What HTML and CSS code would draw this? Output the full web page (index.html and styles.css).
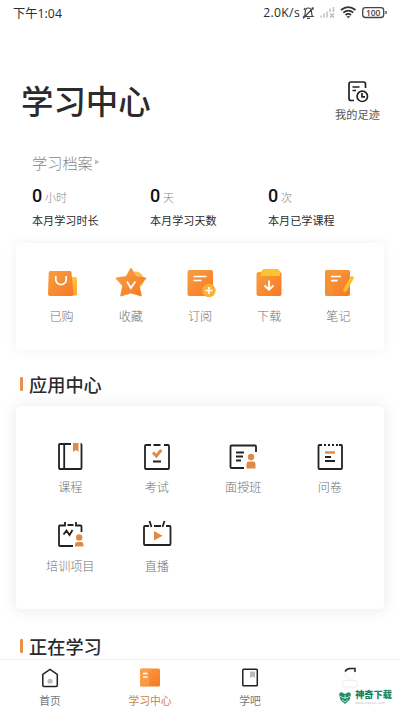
FILE: index.html
```html
<!DOCTYPE html>
<html lang="zh-CN">
<head>
<meta charset="utf-8">
<title>学习中心</title>
<link rel="stylesheet" href="styles.css">
</head>
<body>
<svg width="0" height="0" class="defs">
  <defs>
    <linearGradient id="og" x1="0" y1="0" x2="1" y2="1"><stop offset="0" stop-color="#f6a040"/><stop offset="1" stop-color="#f87826"/></linearGradient>
    <linearGradient id="yg" x1="0" y1="0" x2="0" y2="1"><stop offset="0" stop-color="#fdc540"/><stop offset="1" stop-color="#fca62e"/></linearGradient>
  </defs>
</svg>
<div class="screen">
  <div class="status">
    <span class="time">下午<span class="digits">1:04</span></span>
    <span class="speed">2.0K/s</span>
    <svg class="status-icons" width="88" height="16" viewBox="300 5 88 16" fill="none">
      <path d="M304 16.500c1.200-1 1.300-2.500 1.300-4.500 0-2.500 1.300-4 3-4s3.200 1.500 3.200 4c0 2 .2 3.500 1.400 4.500zM307 18.300h3M303 18.500 313.500 7.500M312 7.500l1.500 2M304 10l1-2" stroke="#444" stroke-width="1.200"/>
      <path d="M321 17.500v-2M324 17.500v-4M327 17.500v-6M330 12V8.500M333.500 12V7M330 13.500l4 4M334 13.500l-4 4" stroke="#bbb" stroke-width="1.400"/>
      <path d="M341 10c4.500-3.500 10-3.500 14.500 0M343.300 12.600c3-2.500 7-2.500 10 0M345.500 15c1.800-1.500 3.800-1.500 5.600 0" stroke="#333" stroke-width="1.700"/>
      <path d="M346.300 16.300h4l-2 2z" fill="#333"/>
      <rect x="362.700" y="7.700" width="21" height="9.800" rx="2.800" stroke="#444" stroke-width="1.300"/>
      <path d="M386 11v3" stroke="#444" stroke-width="1.300"/>
      <text class="battery-text" x="373.200" y="15.500" text-anchor="middle">100</text>
    </svg>
  </div>

  <header class="header">
    <h1>学习中心</h1>
    <div class="footprint">
      <svg width="22" height="23" viewBox="347 80 22 23" fill="none" stroke="#222" stroke-width="1.700">
        <path d="M354 100.500h-3q-2 0-2-2V84q0-2 2-2h12.500q2 0 2 2v4M352.500 87h7M352.500 90.500h3.500"/>
        <circle cx="362.300" cy="96.300" r="5.200"/><path d="M362 93v3.800h3"/>
      </svg>
      <span>我的足迹</span>
    </div>
  </header>

  <section class="archive">
    <div class="archive-title">学习档案<svg width="5" height="6" viewBox="0 0 5 6"><path d="M0 .5 4.500 3 0 5.500z" fill="#bbb"/></svg></div>
    <div class="stats">
      <div class="stat"><p><b>0</b>小时</p><span>本月学习时长</span></div>
      <div class="stat"><p><b>0</b>天</p><span>本月学习天数</span></div>
      <div class="stat"><p><b>0</b>次</p><span>本月已学课程</span></div>
    </div>
  </section>

  <nav class="card quick">
    <div class="item">
      <svg width="32" height="32" viewBox="0 0 32 32"><rect x="18" y="9" width="13" height="18.500" rx="1.500" fill="url(#yg)"/><path d="M4 3h20q1.500 0 1.500 1.500l2 21.500q0 2-1.700 2H4q-2 0-2-2L2.700 4.500Q2.700 3 4 3z" fill="url(#og)"/><path d="M9.800 8v3.500a5.200 5.200 0 0 0 10.400 0V8" fill="none" stroke="#fff" stroke-width="1.700"/></svg>
      <span>已购</span>
    </div>
    <div class="item">
      <svg width="32" height="32" viewBox="0 0 32 32"><circle cx="20.500" cy="12" r="8.500" fill="#fdc057"/><path d="M16 1 20.300 8.800 30.300 10.500 23.600 17.500 25.800 27.500 16 24.300 6.200 27.500 8.200 17.500 1.700 10.500 11.700 8.800z" fill="url(#og)" stroke="url(#og)" stroke-width="1.800" stroke-linejoin="round"/><path d="m12 13.500 3.800 6.500 4.500-6.500" fill="none" stroke="#fff" stroke-width="1.800"/></svg>
      <span>收藏</span>
    </div>
    <div class="item">
      <svg width="32" height="32" viewBox="0 0 32 32"><rect x="3.500" y="2" width="25.500" height="26" rx="2" fill="url(#og)"/><path d="M9.500 8.500h13M9.500 12.500h8" stroke="#fff" stroke-width="1.700"/><circle cx="25" cy="22.500" r="6.700" fill="#fbb03b"/><path d="M21.500 22.500h7M25 19v7" stroke="#fff" stroke-width="1.700"/></svg>
      <span>订阅</span>
    </div>
    <div class="item">
      <svg width="32" height="32" viewBox="0 0 32 32"><rect x="3.500" y="4" width="25" height="24" rx="2" fill="url(#og)"/><path d="M10 1h15l1 1.500h1V8H8V3h1z" fill="#fdc22f"/><path d="M16 12.500v9M11.500 17.500l4.500 4.300 4.500-4.300" fill="none" stroke="#fff" stroke-width="1.900"/></svg>
      <span>下载</span>
    </div>
    <div class="item">
      <svg width="32" height="32" viewBox="0 0 32 32"><rect x="3" y="2" width="25" height="26" rx="2" fill="url(#og)"/><path d="M4.500 2H11v26H4.500Q3 28 3 26.500v-23Q3 2 4.500 2z" fill="#f3922f" opacity=".6"/><path d="M9 8.500h10M9 12.700h6.500" stroke="#fff" stroke-width="1.700"/><path d="M30 10 23 22" stroke="#fdc030" stroke-width="3.600" stroke-linecap="round"/></svg>
      <span>笔记</span>
    </div>
  </nav>

  <h2 class="section-title apps-title">应用中心</h2>

  <section class="card apps">
    <div class="item">
      <svg width="32" height="32" viewBox="0 0 32 32" fill="none" stroke="#222" stroke-width="1.800"><path d="M17 3H6Q5 3 5 4v23q0 1 1 1h20.500q1 0 1-1V4q0-1-1-1M10.200 3v25"/><path d="M19 2h5.500v9l-2.700-2L19 11z" fill="#e28a43" stroke="none"/></svg>
      <span>课程</span>
    </div>
    <div class="item">
      <svg width="32" height="32" viewBox="0 0 32 32" fill="none" stroke="#222" stroke-width="1.800"><path d="M10 4H5Q4 4 4 5v22q0 1 1 1h22q1 0 1-1V5q0-1-1-1h-4M12.500 4h7M12 20.500h8"/><path d="m12 11.500 3.300 3.500 5-6" stroke="#e28a43" stroke-width="3"/></svg>
      <span>考试</span>
    </div>
    <div class="item">
      <svg width="32" height="32" viewBox="0 0 32 32" fill="none" stroke="#222" stroke-width="1.800"><path d="M29 11V5.500q0-1-1-1H4.500q-1 0-1 1V26q0 1 1 1H17M9 11.500h8M9 15.500h7M9 19.500h5"/><circle cx="24" cy="16" r="3.200" fill="#e28a43" stroke="none"/><path d="M19.500 27.500V23q0-2.500 2.500-2.500h4q2.500 0 2.500 2.500v4.500z" fill="#e28a43" stroke="none"/></svg>
      <span>面授班</span>
    </div>
    <div class="item">
      <svg width="32" height="32" viewBox="0 0 32 32" fill="none" stroke="#222" stroke-width="1.800"><path d="M8 4H5.500q-1 0-1 1v22q0 1 1 1H27q1 0 1-1V5q0-1-1-1h-2M10 4h2M14 4h2M18 4h2M22 4h2M11 16h6M11 20h10"/><path d="M11 11.500h10" stroke="#e28a43" stroke-width="2.400"/></svg>
      <span>问卷</span>
    </div>
    <div class="item">
      <svg width="32" height="32" viewBox="0 0 32 32" fill="none" stroke="#222" stroke-width="1.800"><path d="M11 2v3.500H6Q5 5.500 5 6.500V25q0 1 1 1h13M13.500 5h6M22 2v3.500h4.500q1 0 1 1V12M9.500 14.500l3-4 3 4.500 3-5"/><circle cx="25.200" cy="17.500" r="3.200" fill="#e28a43" stroke="none"/><path d="M21 26.500V25q0-3 2.500-3h3.500q2.500 0 2.500 3v1.500z" fill="#e28a43" stroke="none"/></svg>
      <span>培训项目</span>
    </div>
    <div class="item">
      <svg width="32" height="32" viewBox="0 0 32 32" fill="none" stroke="#222" stroke-width="1.800"><path d="M8 6H4Q3 6 3 7v17q0 1 1 1h24.500q1 0 1-1V7q0-1-1-1H25M13 6h7M8.500 1l2 6M23.500 1l-2 6"/><path d="M13 11v9.500l8.500-4.700z" fill="#e28a43" stroke="none"/></svg>
      <span>直播</span>
    </div>
  </section>

  <h2 class="section-title learning-title">正在学习</h2>

  <footer class="tabs">
    <div class="tab">
      <svg width="24" height="22" viewBox="0 0 24 22"><path d="M4.800 7.500v11q0 1 1 1h12.500q1 0 1-1v-11L12 2.300z" fill="none" stroke="#222" stroke-width="1.500"/><rect x="9.500" y="12" width="5" height="4.500" rx="1.500" fill="#bbb"/></svg>
      <span>首页</span>
    </div>
    <div class="tab active">
      <svg width="24" height="22" viewBox="0 0 24 22"><rect x="2" y="1.500" width="20" height="18" rx="1.500" fill="url(#og)"/><path d="M2 3q0-1.500 1.500-1.500H11v18H3.500Q2 19.500 2 18z" fill="#faa554" opacity=".6"/><path d="M5 6.500h4.500M5 10h4.500" stroke="#fff" stroke-width="1.500"/></svg>
      <span>学习中心</span>
    </div>
    <div class="tab">
      <svg width="24" height="22" viewBox="0 0 24 22"><rect x="4.800" y="2.300" width="14.500" height="16.500" rx=".8" fill="none" stroke="#222" stroke-width="1.500"/><path d="M12 4.500h5V11l-2.500-1.500L12 11z" fill="#bbb"/></svg>
      <span>学吧</span>
    </div>
    <div class="tab mine">
      <svg width="24" height="22" viewBox="0 0 24 22" fill="none"><circle cx="12" cy="7" r="5" stroke="#f1f1f1"/><rect x="4.500" y="13.500" width="15" height="6.500" rx="2" stroke="#eee"/><path d="M7 4.500Q9 1.500 12 1.500h5V5" stroke="#222" stroke-width="1.500"/></svg>
      <div class="brand">
        <svg width="12" height="12" viewBox="0 0 12 12"><path d="m0 2 2-2 4 2 4-2 2 2-1.500 6L6 12 1.500 8z" fill="#218f69"/><path d="m1 4 3 1.800h4L11 4M3 7.500 6 10l3-2.500M6 3v4" fill="none" stroke="#d8f0e7" stroke-width=".8"/></svg>
        <div class="brand-name"><strong>神奇下载</strong><small>www.xqszz.com</small></div>
      </div>
    </div>
  </footer>
</div>
</body>
</html>
```

FILE: styles.css
```css
* { box-sizing: border-box; margin: 0; padding: 0; }
body { background: #fff; font-family: "Noto Sans CJK SC", sans-serif; color: #2a2b2d; }
.defs { display: block; height: 0; }
svg { display: block; flex: none; }
.screen { width: 400px; height: 711px; overflow: hidden; display: flex; flex-direction: column; }
.status { height: 26px; flex: none; padding: 0 12px 0 13px; display: flex; align-items: center; line-height: 26px; }
.time { font-size: 12.2px; margin-right: auto; }
.digits { font-family: "Open Sans", sans-serif; font-size: 12.3px; letter-spacing: .1px; }
.speed { font-family: "Open Sans", "Noto Sans CJK SC", sans-serif; font-size: 12.2px; letter-spacing: .3px; }
.battery-text { font: 600 8.5px "Open Sans", sans-serif; fill: #444; }

.header { height: 124px; flex: none; padding: 54px 20px 0 21px; display: flex; justify-content: space-between; }
h1 { font-size: 32.4px; font-weight: 500; line-height: 40px; }
.footprint { display: flex; flex-direction: column; align-items: center; width: 45px; font-size: 11.2px; line-height: 16px; white-space: nowrap; color: #555; gap: 3px; }
.footprint svg { margin-left: 1px; }

.archive { height: 93px; flex: none; padding-left: 32px; }
.archive-title { display: flex; align-items: center; gap: 2px; font-size: 15.2px; line-height: 23px; height: 24px; color: #85878a; font-weight: 300; }
.stats { display: flex; padding-top: 10px; }
.stat { width: 118px; }
.stat p { height: 24px; display: flex; align-items: baseline; gap: 4px; font-size: 11px; line-height: 24px; color: #85878a; font-weight: 300; }
.stat b { font-family: Roboto, sans-serif; font-size: 18px; font-weight: 500; color: #111; width: 9px; }
.stat span { display: block; font-size: 11.1px; line-height: 16px; margin-top: 4px; }

.card { margin: 0 16px; flex: none; background: #fff; border-radius: 5px; }
.item { display: flex; flex-direction: column; align-items: center; font-size: 12.1px; font-weight: 300; line-height: 18px; color: #707275; }
.quick { height: 107px; padding: 25px 11px 0; display: grid; grid-template-columns: repeat(5, 1fr); box-shadow: 0 0 12px rgba(110, 140, 180, .11); }
.quick .item { gap: 7px; }
.apps { height: 203px; padding: 35px 11px 0; display: grid; grid-template-columns: repeat(4, 1fr); grid-auto-rows: 79px; align-content: start; box-shadow: 0 0 15px rgba(90, 110, 145, .17); }
.apps .item { gap: 5px; }

.section-title { margin-left: 20px; display: flex; align-items: center; gap: 6px; flex: none; font-size: 18.2px; line-height: 24px; font-weight: 500; }
.section-title::before { content: ""; width: 3px; height: 14px; border-radius: 1px; background: #e89048; }
.apps-title { height: 56px; padding-bottom: 0; padding-top: 11px; }
.learning-title { height: 50px; padding-top: 23px; }

.tabs { height: 52px; flex: none; border-top: 1px solid #ececec; background: #fff; display: grid; grid-template-columns: repeat(4, 1fr); padding-top: 7px; }
.tab { display: flex; flex-direction: column; align-items: center; gap: 3px; font-size: 10.8px; line-height: 16px; color: #77797b; }
.active { color: #c88447; }
.mine { gap: 1px; }
.brand { display: flex; align-items: center; gap: 4px; margin-left: 31px; }
.brand-name { display: flex; flex-direction: column; }
.brand strong { font-size: 9.2px; line-height: 9px; font-weight: 900; color: #168260; white-space: nowrap; }
.brand small { font: 3.5px/4px "Liberation Sans", sans-serif; color: #bbb; padding-top: 2px; letter-spacing: .4px; }
```
